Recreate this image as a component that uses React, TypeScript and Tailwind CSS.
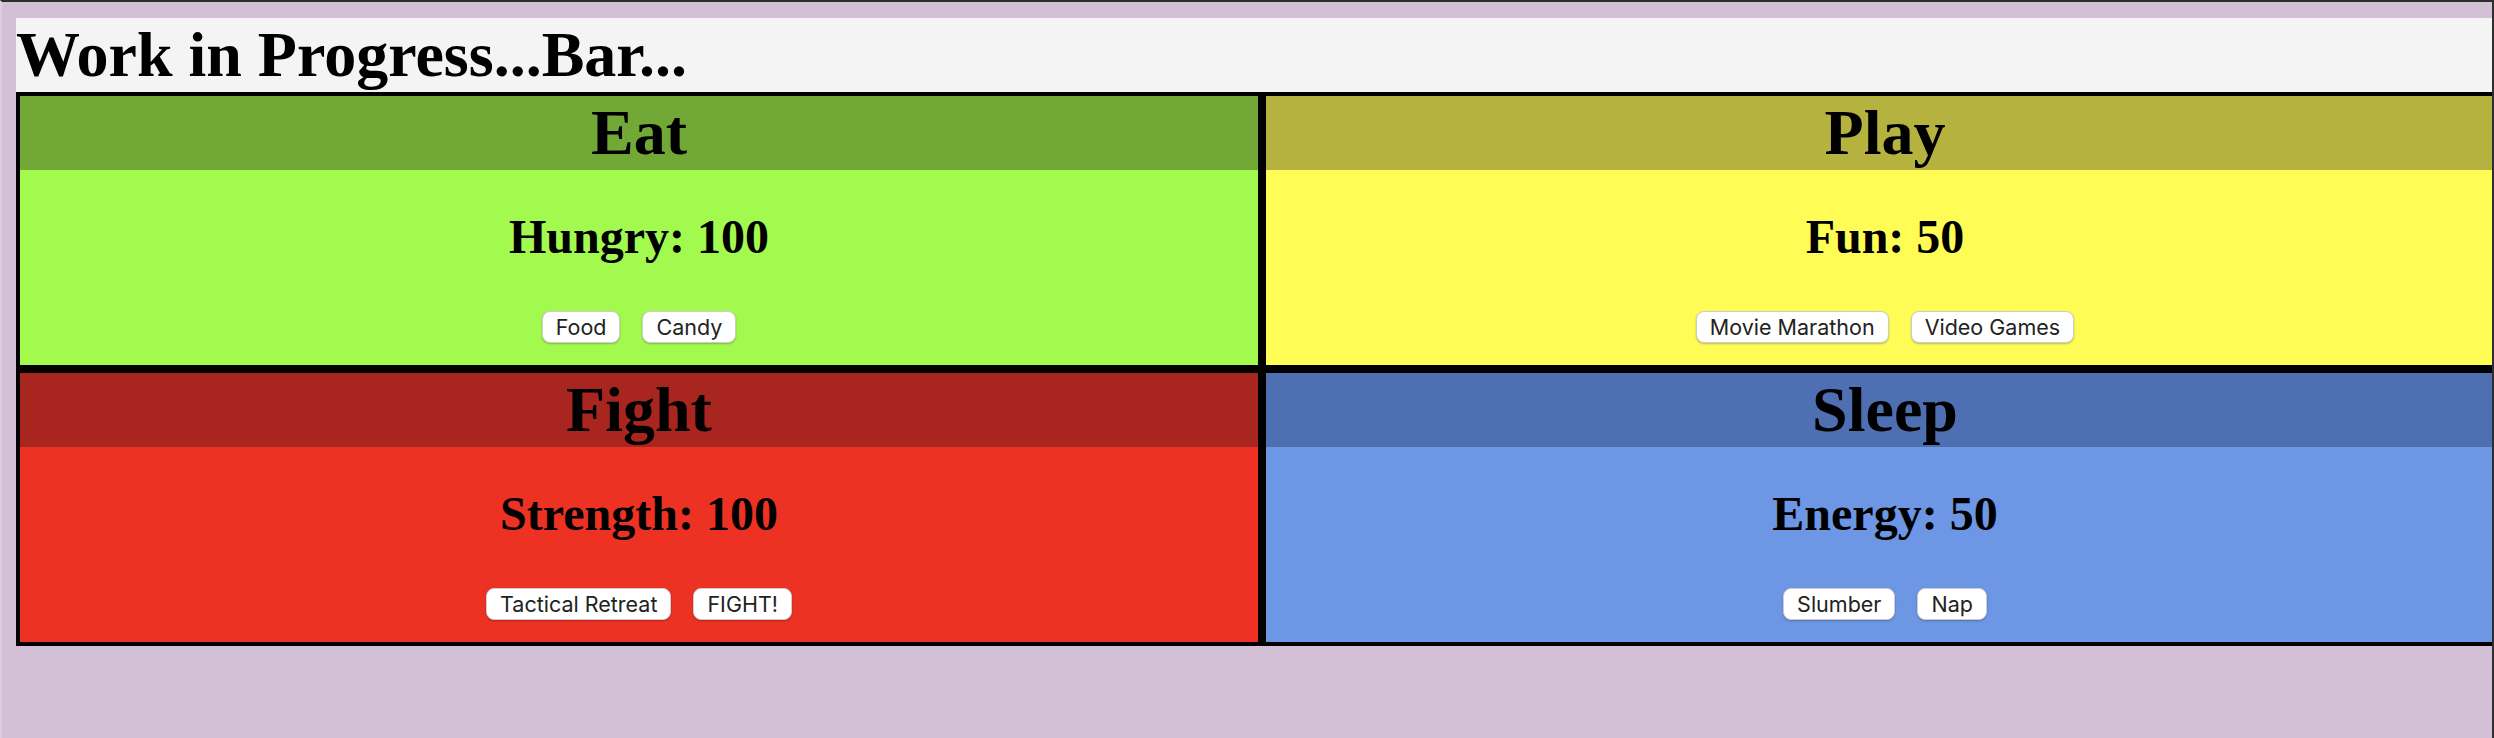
import React from 'react';

interface Need {
  title: string;
  stat: string;
  value: number;
  actions: string[];
  headBg: string;
  bodyBg: string;
}

const needs: Need[] = [
  { title: 'Eat', stat: 'Hungry', value: 100, actions: ['Food', 'Candy'], headBg: 'bg-[#72a836]', bodyBg: 'bg-[#a3fa4f]' },
  { title: 'Play', stat: 'Fun', value: 50, actions: ['Movie Marathon', 'Video Games'], headBg: 'bg-[#b6b240]', bodyBg: 'bg-[#fffd55]' },
  { title: 'Fight', stat: 'Strength', value: 100, actions: ['Tactical Retreat', 'FIGHT!'], headBg: 'bg-[#a8261f]', bodyBg: 'bg-[#ed3224]' },
  { title: 'Sleep', stat: 'Energy', value: 50, actions: ['Slumber', 'Nap'], headBg: 'bg-[#4e70b3]', bodyBg: 'bg-[#6d97e5]' },
];

const serif = { fontFamily: '"Liberation Serif", "Times New Roman", serif' };

const NeedCard: React.FC<{ need: Need }> = ({ need }) => (
  <div className="border-4 border-black flex flex-col">
    <h1
      className={`${need.headBg} h-[74px] leading-[74px] text-[64px] font-bold text-center text-black`}
      style={serif}
    >
      {need.title}
    </h1>
    <div className={`${need.bodyBg} h-[195px] flex flex-col items-center`}>
      <h2 className="mt-[39px] text-[48px] leading-[55px] font-bold text-black" style={serif}>
        {need.stat}: {need.value}
      </h2>
      <div className="mt-[47px] flex gap-[22px]">
        {need.actions.map(action => (
          <button
            key={action}
            className="h-[32px] px-[13px] rounded-[8px] bg-white border border-[#cdcdcd] shadow-[0_1px_2px_rgba(0,0,0,0.25)] text-[21.5px] leading-[30px] text-[#222]"
            style={{ fontFamily: 'Inter, "Noto Sans", sans-serif' }}
          >
            {action}
          </button>
        ))}
      </div>
    </div>
  </div>
);

export default function App() {
  return (
    <div className="w-[2494px] h-[738px] overflow-hidden bg-[#d3c0d7] border-t-2 border-r-2 border-[#2e2e2e] border-l-2 border-l-[#dccde0]">
      <div className="pt-[16px] pl-[14px] flex flex-col">
        <h1
          className="w-[2492px] shrink-0 h-[74px] leading-[74px] bg-[#f4f4f4] text-[64px] font-bold text-black"
          style={serif}
        >
          Work in Progress...Bar...
        </h1>
        <div className="grid grid-cols-[1246px_1246px] w-[2492px] shrink-0">
          {needs.map(need => (
            <NeedCard key={need.title} need={need} />
          ))}
        </div>
      </div>
    </div>
  );
}
